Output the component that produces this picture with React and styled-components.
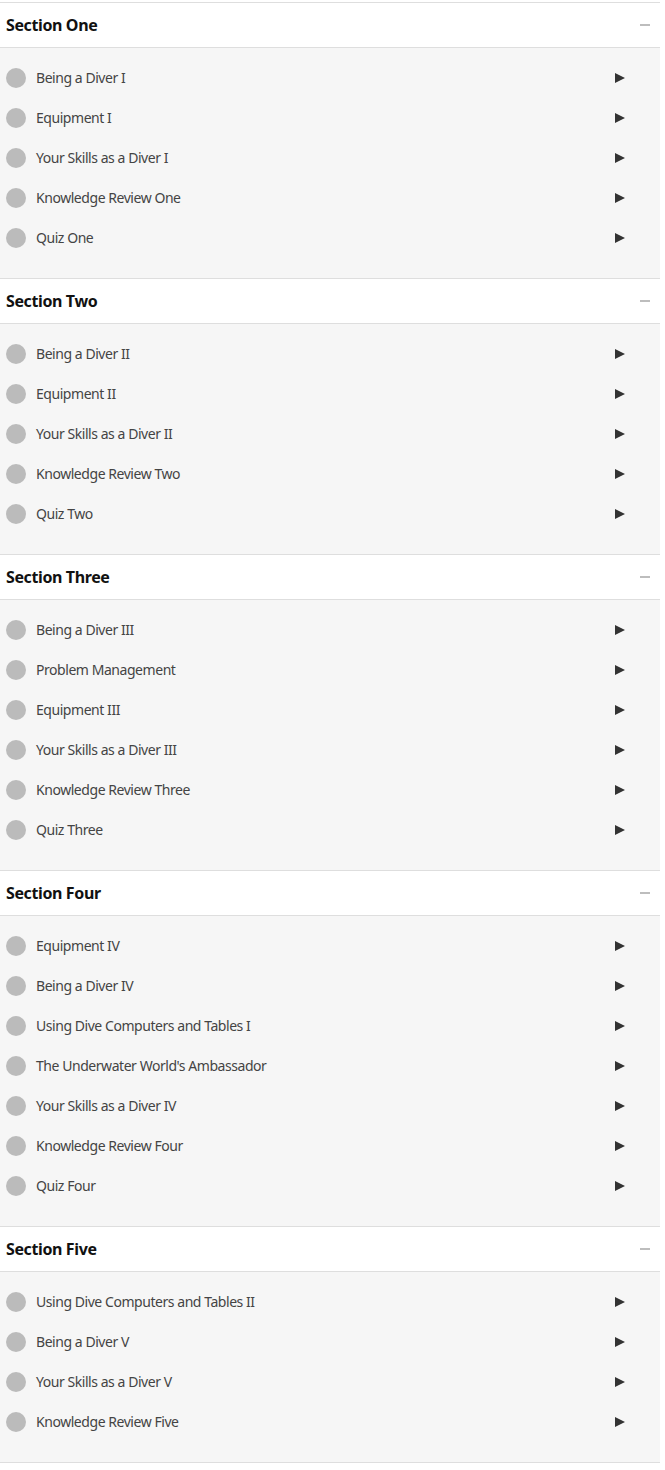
import React from 'react';
import styled, { createGlobalStyle } from 'styled-components';

const GlobalStyle = createGlobalStyle`
	html, body {
		margin: 0;
		padding: 0;
		background: #ffffff;
		font-family: "Noto Sans", "Open Sans", sans-serif;
	}
`;

const Course = styled.div`
	width: 660px;
	padding-top: 2px;
`;

const Section = styled.section`
	border-top: 1px solid #dedede;
	&:last-child {
		border-bottom: 1px solid #dedede;
	}
`;

const Header = styled.div`
	display: flex;
	align-items: center;
	justify-content: space-between;
	height: 44px;
	padding: 0 10px 0 6px;
	background: #ffffff;
	border-bottom: 1px solid #dedede;
	h2 {
		margin: 0;
		font-size: 16px;
		font-weight: 700;
		letter-spacing: -0.38px;
		color: #111;
	}
`;

const Minus = styled.span`
	display: block;
	width: 10px;
	height: 2px;
	background: #bdbdbd;
`;

const List = styled.ul`
	list-style: none;
	margin: 0;
	padding: 9px 0 21px;
	background: #f6f6f6;
`;

const Item = styled.li`
	display: flex;
	align-items: center;
	height: 40px;
	padding: 0 35px 0 6px;
	font-size: 14px;
	letter-spacing: -0.45px;
	color: #444;
`;

const Dot = styled.span`
	width: 20px;
	height: 20px;
	margin-top: 2px;
	border-radius: 50%;
	background: #bbbbbb;
	margin-right: 10px;
	flex-shrink: 0;
`;

const Title = styled.span`
	flex: 1;
`;

const Arrow = styled.span`
	width: 0;
	height: 0;
	margin-top: 2px;
	border-top: 5px solid transparent;
	border-bottom: 5px solid transparent;
	border-left: 10px solid #333;
`;

const sections = [
	{ name: 'Section One', items: ['Being a Diver I', 'Equipment I', 'Your Skills as a Diver I', 'Knowledge Review One', 'Quiz One'] },
	{ name: 'Section Two', items: ['Being a Diver II', 'Equipment II', 'Your Skills as a Diver II', 'Knowledge Review Two', 'Quiz Two'] },
	{ name: 'Section Three', items: ['Being a Diver III', 'Problem Management', 'Equipment III', 'Your Skills as a Diver III', 'Knowledge Review Three', 'Quiz Three'] },
	{ name: 'Section Four', items: ['Equipment IV', 'Being a Diver IV', 'Using Dive Computers and Tables I', "The Underwater World's Ambassador", 'Your Skills as a Diver IV', 'Knowledge Review Four', 'Quiz Four'] },
	{ name: 'Section Five', items: ['Using Dive Computers and Tables II', 'Being a Diver V', 'Your Skills as a Diver V', 'Knowledge Review Five'] },
];

export default function App() {
	return (
		<>
			<GlobalStyle />
			<Course>
				{sections.map((section) => (
					<Section key={section.name}>
						<Header>
							<h2>{section.name}</h2>
							<Minus />
						</Header>
						<List>
							{section.items.map((item) => (
								<Item key={item}>
									<Dot />
									<Title>{item}</Title>
									<Arrow />
								</Item>
							))}
						</List>
					</Section>
				))}
			</Course>
		</>
	);
}
